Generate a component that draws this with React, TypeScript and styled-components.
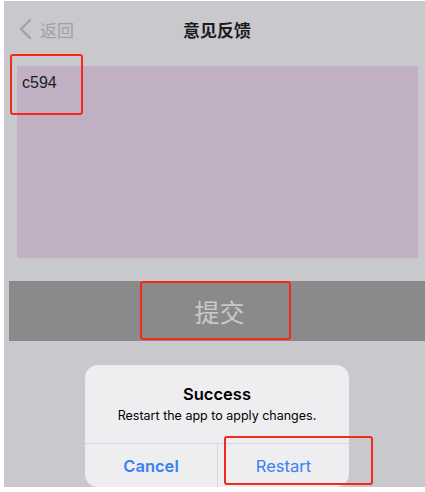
import * as React from "react";
import styled, { createGlobalStyle } from "styled-components";

const GlobalStyle = createGlobalStyle`
  html, body {
    margin: 0;
    padding: 0;
    background: #ffffff;
  }
  * {
    box-sizing: border-box;
  }
`;

const Root = styled.div`
  width: 425px;
  height: 492px;
  overflow: hidden;
  background: #ffffff;
  padding: 1px 0 0 4px;
`;

const Screen = styled.div`
  position: relative;
  width: 426px;
  height: 486px;
  background-color: #c9c8cd;
  display: flex;
  flex-direction: column;
  font-family: "Noto Sans CJK SC", "Liberation Sans", sans-serif;
`;

const NavBar = styled.div`
  height: 56px;
  display: grid;
  grid-template-columns: 1fr auto 1fr;
  align-items: center;
  padding: 0 14px;
`;

const BackButton = styled.div`
  display: flex;
  align-items: center;
  gap: 8px;
  color: #a2a1a6;
  font-size: 17px;
`;

const Title = styled.div`
  font-size: 17px;
  font-weight: 700;
  color: #1c1c1e;
`;

const FeedbackBox = styled.div`
  margin: 9px 12px 0 13px;
  height: 192px;
  background-color: #c1afc4;
  padding: 7px 5px;
  font-family: "Liberation Sans", Arial, sans-serif;
  font-size: 16px;
  line-height: 20px;
  color: #1e1e1e;
`;

const SubmitBar = styled.div`
  margin: 23px 0 0 5px;
  height: 60px;
  background-color: #8a8a8a;
  display: flex;
  align-items: center;
  justify-content: center;
  font-size: 25px;
  color: #c9c9c9;
`;

const Annotation = styled.div<{ $x: number; $y: number; $w: number; $h: number }>`
  position: absolute;
  left: ${(p) => p.$x}px;
  top: ${(p) => p.$y}px;
  width: ${(p) => p.$w}px;
  height: ${(p) => p.$h}px;
  border: 2.5px solid #f3291b;
  border-radius: 3px;
  z-index: 2;
`;

const Alert = styled.div`
  position: absolute;
  left: 81px;
  top: 364px;
  width: 264px;
  height: 122px;
  background-color: #eeeef0;
  border-radius: 13px;
  display: flex;
  flex-direction: column;
  font-family: Inter, "Liberation Sans", sans-serif;
  overflow: hidden;
`;

const AlertBody = styled.div`
  padding: 18px 14px 18px;
  text-align: center;
  color: #000000;
  display: flex;
  flex-direction: column;
  gap: 2px;
`;

const AlertTitle = styled.div`
  font-size: 16.5px;
  font-weight: 600;
  line-height: 22px;
`;

const AlertMessage = styled.div`
  font-size: 12.5px;
  line-height: 18px;
`;

const AlertActions = styled.div`
  flex: 1;
  display: grid;
  grid-template-columns: 1fr 1fr;
  border-top: 1px solid #d6d6da;
`;

const AlertButton = styled.div<{ $bold?: boolean }>`
  display: flex;
  align-items: center;
  justify-content: center;
  font-size: 16.5px;
  font-weight: ${(p) => (p.$bold ? 600 : 400)};
  color: #3a7ff3;
  & + & {
    border-left: 1px solid #d6d6da;
  }
`;

const ChevronLeft = () => (
  <svg width="14" height="22" viewBox="0 0 14 22" fill="none">
    <path
      d="M12 2 L3 11 L12 20"
      stroke="#a2a1a6"
      strokeWidth="2.4"
      strokeLinecap="round"
      strokeLinejoin="round"
    />
  </svg>
);

export default function App() {
  return (
    <>
      <GlobalStyle />
      <Root>
        <Screen>
          <NavBar>
            <BackButton>
              <ChevronLeft />
              <span>返回</span>
            </BackButton>
            <Title>意见反馈</Title>
            <div />
          </NavBar>
          <FeedbackBox>c594</FeedbackBox>
          <SubmitBar>提交</SubmitBar>

          <Alert>
            <AlertBody>
              <AlertTitle>Success</AlertTitle>
              <AlertMessage>Restart the app to apply changes.</AlertMessage>
            </AlertBody>
            <AlertActions>
              <AlertButton $bold>Cancel</AlertButton>
              <AlertButton>Restart</AlertButton>
            </AlertActions>
          </Alert>

          <Annotation $x={6} $y={53} $w={73} $h={61} />
          <Annotation $x={136} $y={280} $w={151} $h={59} />
          <Annotation $x={220} $y={435} $w={149} $h={49} />
        </Screen>
      </Root>
    </>
  );
}
